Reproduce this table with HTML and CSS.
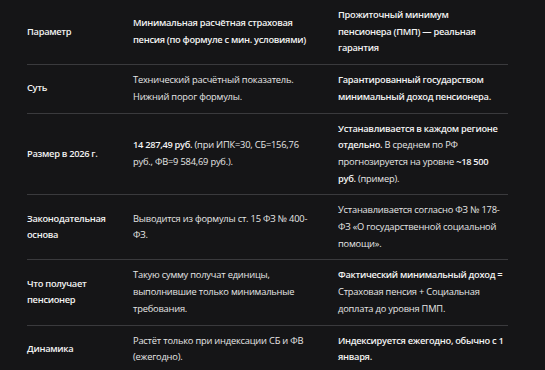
FILE: index.html
```html
<!DOCTYPE html>
<html lang="ru">
<head>
<meta charset="utf-8">
<link rel="stylesheet" href="styles.css">
</head>
<body>
<div class="wrap">
<table class="cmp">
  <colgroup>
    <col class="c1"><col class="c2"><col class="c3">
  </colgroup>
  <thead>
    <tr>
      <th>Параметр</th>
      <th>Минимальная расчётная страховая пенсия (по формуле с мин. условиями)</th>
      <th>Прожиточный минимум пенсионера (ПМП) — реальная гарантия</th>
    </tr>
  </thead>
  <tbody>
    <tr>
      <td class="k">Суть</td>
      <td>Технический расчётный показатель. Нижний порог формулы.</td>
      <td><b>Гарантированный государством минимальный доход пенсионера.</b></td>
    </tr>
    <tr>
      <td class="k">Размер в 2026 г.</td>
      <td><b>14 287,49 руб.</b> (при ИПК=30, СБ=156,76 руб., ФВ=9 584,69 руб.).</td>
      <td><b>Устанавливается в каждом регионе отдельно.</b> В среднем по РФ прогнозируется на уровне <b>~18 500 руб.</b> (пример).</td>
    </tr>
    <tr>
      <td class="k">Законодательная основа</td>
      <td>Выводится из формулы ст. 15 ФЗ № 400-ФЗ.</td>
      <td>Устанавливается согласно ФЗ № 178-ФЗ «О государственной социальной помощи».</td>
    </tr>
    <tr>
      <td class="k">Что получает пенсионер</td>
      <td>Такую сумму получат единицы, выполнившие только минимальные требования.</td>
      <td><b>Фактический минимальный доход =</b> Страховая пенсия + Социальная доплата до уровня ПМП.</td>
    </tr>
    <tr>
      <td class="k">Динамика</td>
      <td>Растёт только при индексации СБ и ФВ (ежегодно).</td>
      <td><b>Индексируется ежегодно, обычно с 1 января.</b></td>
    </tr>
  </tbody>
</table>
</div>
</body>
</html>
```

FILE: styles.css
```css
html, body {
  margin: 0;
  padding: 0;
  background: #151517;
}
.wrap {
  padding: 0 37px 0 27px;
}
.cmp {
  width: 481px;
  border-collapse: collapse;
  table-layout: fixed;
  font-family: "Open Sans", "Noto Sans", sans-serif;
  font-size: 9.3px;
  letter-spacing: -0.2px;
  line-height: 16.7px;
  color: #e6e6e6;
}
.c1 { width: 106px; }
.c2 { width: 205px; }
.c3 { width: 170px; }
.cmp th, .cmp td {
  text-align: left;
  vertical-align: middle;
  padding: 7px 16px 7px 0;
  border-bottom: 1px solid #3a3a3d;
}
.cmp th {
  font-weight: 600;
  letter-spacing: -0.3px;
  color: #f2f2f2;
}
.cmp td.k {
  font-weight: 600;
  letter-spacing: -0.3px;
  color: #f2f2f2;
}
.cmp b {
  font-weight: 600;
  letter-spacing: -0.3px;
  color: #f2f2f2;
}
.cmp th:nth-child(2), .cmp td:nth-child(2) {
  padding-right: 18px;
}
.cmp td:last-child, .cmp th:last-child {
  padding-right: 0;
}
.cmp th:last-child {
  padding-right: 6px;
}
```
